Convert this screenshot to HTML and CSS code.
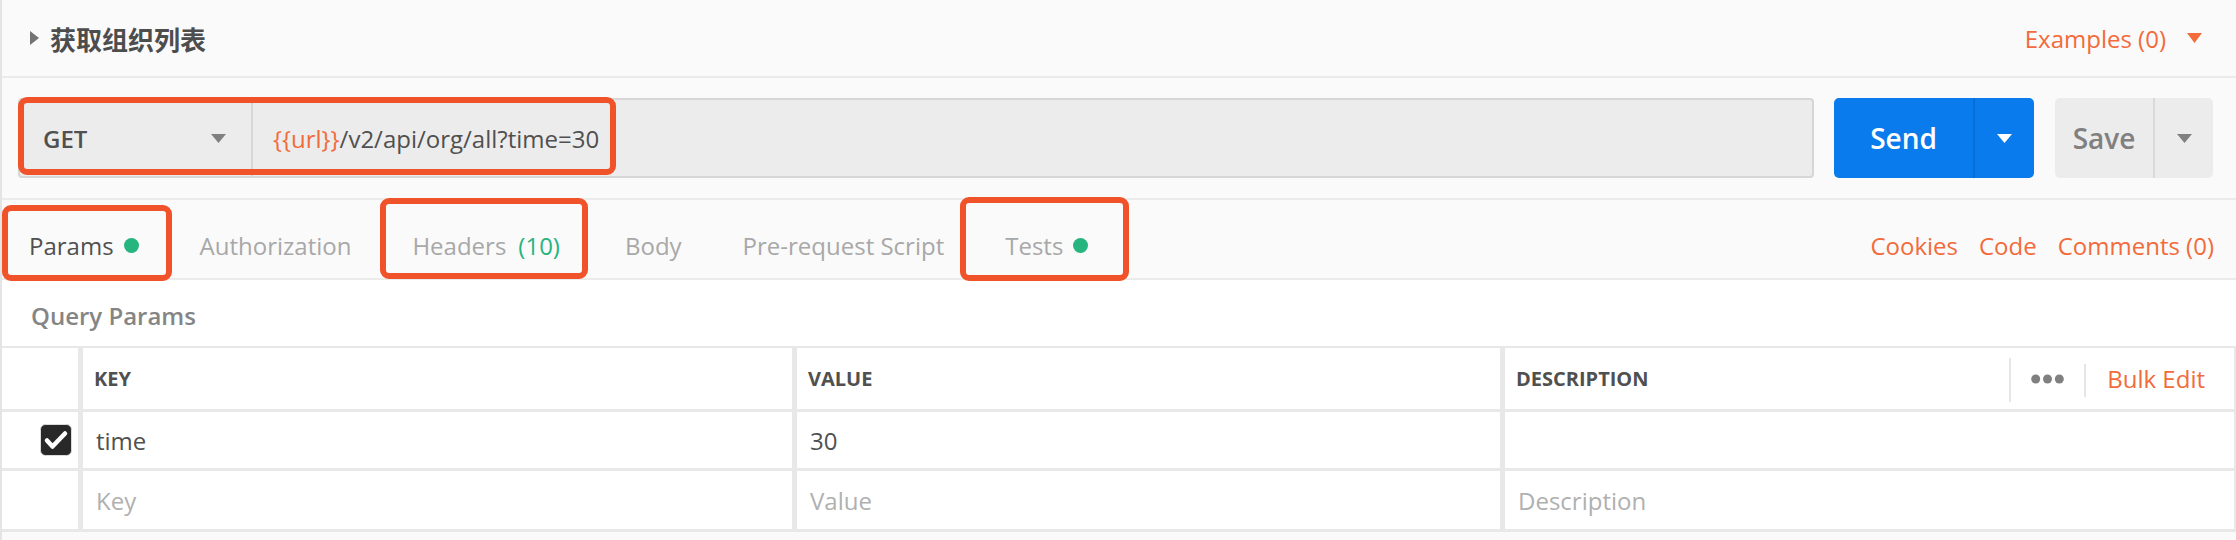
FILE: index.html
```html
<!DOCTYPE html>
<html lang="zh-CN">
<head>
<meta charset="utf-8">
<title>获取组织列表</title>
<link rel="stylesheet" href="styles.css">
</head>
<body>
<div class="page">
  <header class="title-bar">
    <div class="title">
      <svg class="title-caret" width="9" height="14" viewBox="0 0 9 14"><polygon points="0,0 9,7 0,14" fill="#737373"/></svg>
      <span class="title-text">获取组织列表</span>
    </div>
    <div class="examples">
      <span>Examples (0)</span>
      <svg class="examples-caret" width="15" height="10" viewBox="0 0 15 10"><polygon points="0,0 15,0 7.5,10" fill="#f26b3a"/></svg>
    </div>
  </header>

  <section class="url-row">
    <div class="url-bar">
      <div class="method">
        <span class="method-name">GET</span>
        <svg width="15" height="9" viewBox="0 0 15 9"><polygon points="0,0 15,0 7.5,9" fill="#808080"/></svg>
      </div>
      <div class="url-input"><span class="var">{{url}}</span>/v2/api/org/all?time=30</div>
    </div>
    <div class="send-btn">
      <span class="send-label">Send</span>
      <span class="send-drop"><svg width="15" height="9" viewBox="0 0 15 9"><polygon points="0,0 15,0 7.5,9" fill="#ffffff"/></svg></span>
    </div>
    <div class="save-btn">
      <span class="save-label">Save</span>
      <span class="save-drop"><svg width="15" height="9" viewBox="0 0 15 9"><polygon points="0,0 15,0 7.5,9" fill="#808080"/></svg></span>
    </div>
  </section>

  <nav class="tabs">
    <div class="tab-list">
      <div class="tab tab-active">Params<span class="dot"></span></div>
      <div class="tab">Authorization</div>
      <div class="tab tab-headers">Headers<span class="count">(10)</span></div>
      <div class="tab">Body</div>
      <div class="tab">Pre-request Script</div>
      <div class="tab">Tests<span class="dot"></span></div>
    </div>
    <div class="tab-links">
      <span>Cookies</span>
      <span>Code</span>
      <span>Comments (0)</span>
    </div>
  </nav>

  <main class="params">
    <div class="params-title">Query Params</div>
    <div class="kv-table">
      <div class="kv-row kv-head">
        <div class="kv-check"></div>
        <div class="kv-cell">KEY</div>
        <div class="kv-cell">VALUE</div>
        <div class="kv-cell kv-desc">
          <span>DESCRIPTION</span>
          <div class="kv-actions">
            <span class="sep sep-tall"></span>
            <svg class="dots" width="33" height="10" viewBox="0 0 33 10"><circle cx="4.7" cy="5" r="4.5" fill="#808080"/><circle cx="16.5" cy="5" r="4.5" fill="#808080"/><circle cx="28.3" cy="5" r="4.5" fill="#808080"/></svg>
            <span class="sep sep-short"></span>
            <span class="bulk">Bulk Edit</span>
          </div>
        </div>
      </div>
      <div class="kv-row kv-body">
        <div class="kv-check">
          <svg width="32" height="32" viewBox="0 0 32 32"><rect x="0.5" y="0.5" width="31" height="31" rx="5" fill="#282828" stroke="#dcdcdc"/><polyline points="7,16.5 12.5,22.5 25,9.5" fill="none" stroke="#ffffff" stroke-width="4.5" stroke-linecap="round" stroke-linejoin="round"/></svg>
        </div>
        <div class="kv-cell kv-value">time</div>
        <div class="kv-cell kv-value">30</div>
        <div class="kv-cell kv-value"></div>
      </div>
      <div class="kv-row kv-body kv-last">
        <div class="kv-check"></div>
        <div class="kv-cell kv-placeholder">Key</div>
        <div class="kv-cell kv-placeholder">Value</div>
        <div class="kv-cell kv-placeholder">Description</div>
      </div>
    </div>
  </main>

  <div class="mark mark-url"></div>
  <div class="mark mark-params"></div>
  <div class="mark mark-headers"></div>
  <div class="mark mark-tests"></div>
</div>
</body>
</html>
```

FILE: styles.css
```css
* { box-sizing: border-box; }

html, body {
  margin: 0;
  padding: 0;
}

body {
  width: 2236px;
  height: 540px;
  overflow: hidden;
  background: #fafafa;
  font-family: "Open Sans", "Noto Sans", "Noto Sans CJK SC", sans-serif;
  font-size: 24px;
  color: #505050;
}

.page {
  position: relative;
  height: 540px;
  border-left: 2px solid #e4e4e4;
}

/* ---------- title bar ---------- */
.title-bar {
  height: 78px;
  border-bottom: 2px solid #ebebeb;
  display: flex;
  align-items: center;
  justify-content: space-between;
  padding: 0 34px 0 28px;
}

.title {
  display: flex;
  align-items: center;
}

.title-caret {
  margin-right: 11px;
}

.title-text {
  font-family: "Noto Sans CJK SC", "Noto Sans", sans-serif;
  font-size: 26px;
  font-weight: 700;
  color: #4d4d4d;
}

.examples {
  display: flex;
  align-items: center;
  color: #f26b3a;
}

.examples-caret {
  margin-left: 21px;
}

/* ---------- url row ---------- */
.url-row {
  display: flex;
  padding: 20px 23px 20px 16px;
}

.url-bar {
  flex: 1;
  height: 80px;
  display: flex;
  background: #ececec;
  border: 2px solid #d6d6d6;
  border-radius: 4px;
}

.method {
  width: 233px;
  display: flex;
  align-items: center;
  justify-content: space-between;
  padding: 0 25px 0 23px;
  border-right: 2px solid #d6d6d6;
}

.method-name {
  font-size: 24px;
  font-weight: 600;
  color: #505050;
}

.url-input {
  display: flex;
  align-items: center;
  padding-left: 20px;
  font-size: 24px;
  color: #505050;
  white-space: pre;
}

.var {
  color: #f26b3a;
}

.send-btn {
  width: 200px;
  height: 80px;
  margin-left: 20px;
  display: flex;
  background: #097bed;
  border-radius: 5px;
}

.send-label {
  flex: 1;
  display: flex;
  align-items: center;
  justify-content: center;
  font-size: 28px;
  font-weight: 600;
  color: #ffffff;
  border-right: 2px solid #086ed6;
}

.send-drop {
  width: 59px;
  display: flex;
  align-items: center;
  justify-content: center;
}

.save-btn {
  width: 158px;
  height: 80px;
  margin-left: 21px;
  display: flex;
  background: #ececec;
  border-radius: 5px;
}

.save-label {
  flex: 1;
  display: flex;
  align-items: center;
  justify-content: center;
  font-size: 28px;
  font-weight: 600;
  color: #808080;
  border-right: 2px solid #d9d9d9;
}

.save-drop {
  width: 58px;
  display: flex;
  align-items: center;
  justify-content: center;
}

/* ---------- tabs ---------- */
.tabs {
  height: 82px;
  border-top: 2px solid #ebebeb;
  border-bottom: 2px solid #ebebeb;
  display: flex;
  align-items: center;
  justify-content: space-between;
  padding: 12px 22px 0 27px;
}

.tab-list {
  display: flex;
  align-items: center;
  gap: 61px;
}

.tab {
  display: flex;
  align-items: center;
  color: #a8a8a8;
}

.tab-active {
  color: #505050;
}

.tab-headers {
  margin-right: 4px;
}

.dot {
  width: 15px;
  height: 15px;
  border-radius: 50%;
  background: #26b47f;
  margin-left: 10px;
}

.count {
  color: #26b47f;
  margin-left: 12px;
}

.tab-links {
  display: flex;
  gap: 21px;
  color: #f26b3a;
}

/* ---------- params ---------- */
.params-title {
  height: 66px;
  background: #ffffff;
  display: flex;
  align-items: center;
  padding: 4px 0 0 29px;
  font-weight: 600;
  color: #858585;
}

.kv-table {
  background: #ffffff;
  border-top: 2px solid #e8e8e8;
  border-right: 2px solid #e8e8e8;
}

.kv-row {
  display: grid;
  grid-template-columns: 76px 714px 708px 1fr;
  border-bottom: 3px solid #e8e8e8;
}

.kv-head {
  height: 64px;
}

.kv-body {
  height: 59px;
}

.kv-last {
  height: 61px;
}

.kv-check {
  display: flex;
  align-items: center;
  justify-content: flex-end;
  padding-right: 6px;
}

.kv-cell {
  display: flex;
  align-items: center;
  border-left: 5px solid #e8e8e8;
  padding-left: 11px;
}

.kv-head .kv-cell {
  font-size: 20px;
  font-weight: 700;
  color: #505050;
}

.kv-value,
.kv-placeholder {
  padding-left: 13px;
}

.kv-placeholder {
  color: #b0b0b0;
}

.kv-desc {
  padding-right: 29px;
}

.kv-actions {
  margin-left: auto;
  display: flex;
  align-items: center;
}

.sep {
  width: 2px;
  background: #e6e6e6;
}

.sep-tall {
  height: 44px;
  margin-right: 20px;
  margin-top: 3px;
}

.sep-short {
  height: 33px;
  margin-left: 20px;
  margin-right: 21px;
  margin-top: 3px;
}

.dots {
  margin-top: 1px;
}

.kv-head .bulk {
  font-size: 24px;
  font-weight: 400;
  color: #f26b3a;
}

/* ---------- annotation marks ---------- */
.mark {
  position: absolute;
  border: 6px solid #f0532a;
  border-radius: 9px;
}

.mark-url {
  left: 16px;
  top: 97px;
  width: 598px;
  height: 78px;
}

.mark-params {
  left: 0;
  top: 205px;
  width: 170px;
  height: 76px;
}

.mark-headers {
  left: 378px;
  top: 198px;
  width: 208px;
  height: 81px;
}

.mark-tests {
  left: 958px;
  top: 197px;
  width: 169px;
  height: 84px;
}
```
